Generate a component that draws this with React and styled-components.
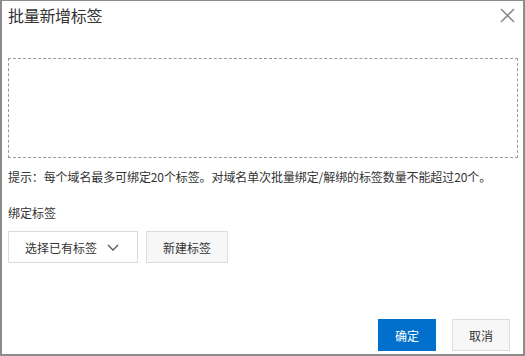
import React from "react";
import styled, { createGlobalStyle } from "styled-components";

const Global = createGlobalStyle`
  html, body { margin: 0; padding: 0; background: #fff; }
  * { box-sizing: border-box; }
  body { font-family: "Noto Sans CJK SC", "Liberation Sans", sans-serif; }
`;

const Dialog = styled.div`
  width: 525px;
  height: 356px;
  border-style: solid;
  border-color: #8c8c8c;
  border-width: 1px 2px 2px 2px;
  background: #fff;
  display: flex;
  flex-direction: column;
  padding: 2px 5px 2px 6px;
  color: #333;
`;

const Header = styled.div`
  display: flex;
  align-items: center;
  justify-content: space-between;
  height: 24px;
`;

const Title = styled.div`
  font-size: 16px;
  line-height: 24px;
  color: #333;
  letter-spacing: -0.3px;
`;

const Close = styled.button`
  border: 0;
  background: none;
  padding: 0;
  width: 16px;
  height: 16px;
  margin-right: 3px;
  display: flex;
  align-items: center;
  justify-content: center;
  cursor: pointer;
`;

const DropArea = styled.div`
  margin-top: 31px;
  height: 100px;
  width: 510px;
  border: 1px dashed #9a9a9a;
`;

const Hint = styled.div`
  margin-top: 10px;
  font-size: 12px;
  line-height: 18px;
  white-space: nowrap;
  letter-spacing: -0.1px;
  color: #333;
`;

const Label = styled.div`
  margin-top: 18px;
  font-size: 12px;
  line-height: 18px;
  color: #333;
`;

const Row = styled.div`
  margin-top: 9px;
  display: flex;
  gap: 8px;
`;

const SelectBox = styled.div`
  width: 130px;
  height: 32px;
  border: 1px solid #dcdcdc;
  background: #fff;
  display: flex;
  align-items: center;
  padding-left: 16px;
  font-size: 12px;
  color: #333;
  gap: 10px;
`;

const Btn = styled.button`
  height: 32px;
  width: ${(p) => p.$w || 58}px;
  border: 1px solid ${(p) => (p.$primary ? "#0070cc" : "#dcdcdc")};
  background: ${(p) => (p.$primary ? "#0070cc" : "#f7f7f7")};
  color: ${(p) => (p.$primary ? "#fff" : "#333")};
  font-family: "Noto Sans CJK SC", "Liberation Sans", sans-serif;
  font-size: 12px;
  padding: 0;
  cursor: pointer;
`;

const Footer = styled.div`
  margin-top: auto;
  display: flex;
  justify-content: flex-end;
  gap: 16px;
  padding-right: 8px;
  padding-bottom: 1px;
`;

export default function App() {
  return (
    <>
      <Global />
      <Dialog>
        <Header>
          <Title>批量新增标签</Title>
          <Close aria-label="close">
            <svg width="15" height="15" viewBox="0 0 15 15">
              <path d="M1 1 L14 14 M14 1 L1 14" stroke="#8f8f8f" strokeWidth="1.6" fill="none" />
            </svg>
          </Close>
        </Header>
        <DropArea />
        <Hint>提示：每个域名最多可绑定20个标签。对域名单次批量绑定/解绑的标签数量不能超过20个。</Hint>
        <Label>绑定标签</Label>
        <Row>
          <SelectBox>
            <span>选择已有标签</span>
            <svg width="12" height="7" viewBox="0 0 12 7">
              <path d="M1 1 L6 6 L11 1" stroke="#555" strokeWidth="1.3" fill="none" />
            </svg>
          </SelectBox>
          <Btn $w={82}>新建标签</Btn>
        </Row>
        <Footer>
          <Btn $primary>确定</Btn>
          <Btn>取消</Btn>
        </Footer>
      </Dialog>
    </>
  );
}
